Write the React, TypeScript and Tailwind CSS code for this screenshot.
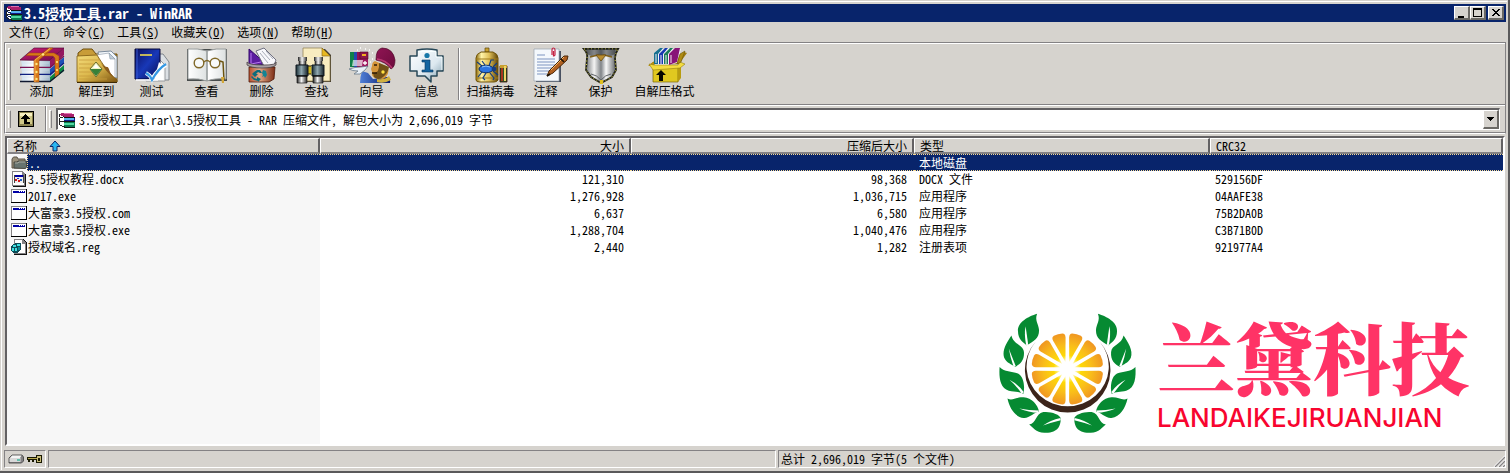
import React from "react";

type IconProps = { className?: string };

/* ---------- small icons ---------- */

const RarIcon = () => (
  <svg viewBox="0 0 16 16" className="h-4 w-4 shrink-0" aria-hidden="true" shapeRendering="crispEdges">
    <path d="M2 1h9l4 1v3H5L1 4V2z" fill="#a8206c" />
    <path d="M3 1h8l3 1H6z" fill="#e070b0" />
    <path d="M5 5h11v5H5z" fill="#101c90" />
    <path d="M5 6h10v2H5z" fill="#58b4f0" />
    <path d="M5 10h11v5H5z" fill="#0a7a50" />
    <path d="M5 11h10v2H5z" fill="#50d8a0" />
    <path d="M1 3l4 2v2H2zM1 7l4 2v2H2zM1 11l4 2v2H3z" fill="#fff" />
    <path d="M0 2h1v3H0zM1 5h3v1H1zM0 6h1v4H0zM1 9h4v1H1zM0 10h1v3H0zM1 13h2v1H1zM3 14h3v1H3zM4 4h1v1H4z" fill="#222" />
    <path d="M5 15h11v1H5zM5 9h11v1H5zM5 5h11v1H5z" fill="#111" />
  </svg>
);

const FolderIcon = () => (
  <svg viewBox="0 0 16 16" className="h-4 w-4 shrink-0" aria-hidden="true">
    <path d="M1 13V4l1.500-2H6l1 2h7v9z" fill="#9a917c" stroke="#5c5547" />
    <path d="M3 13V7h3l1-1h8.500v6l-1 1.500z" fill="#66736f" stroke="#4a4a42" />
    <path d="M4 8h3l1-1h6" stroke="#a6aaa0" fill="none" />
  </svg>
);

const DocxIcon = () => (
  <svg viewBox="0 0 16 16" className="h-4 w-4 shrink-0" aria-hidden="true" shapeRendering="crispEdges">
    <path d="M2 1h10l3 3v12H2z" fill="#111" />
    <path d="M1 0h10l3 3v12H1z" fill="#848284" />
    <path d="M2 1h9v3h2v10H2z" fill="#fff" />
    <path d="M3 4h10v8H3z" fill="#444" />
    <path d="M4 5h8v7H4z" fill="#eee" />
    <path d="M4 4h8v2H4z" fill="#0000a0" />
    <path d="M4 8h2v2H4z" fill="#d01818" />
    <path d="M7 9h2v2H7z" fill="#d01818" />
    <path d="M6 7h2v1H6z" fill="#2030d0" />
    <path d="M9 8h2v2H9z" fill="#2060c0" />
  </svg>
);

const ExeIcon = () => (
  <svg viewBox="0 0 16 16" className="h-4 w-4 shrink-0" aria-hidden="true" shapeRendering="crispEdges">
    <path d="M0 1h16v14H0z" fill="#000" />
    <path d="M0 1h15v13H0z" fill="#848284" />
    <path d="M1 2h14v12H1z" fill="#fff" />
    <path d="M2 3h12v2H2z" fill="#0000a5" />
    <path d="M8 3h1v1H8zM10 3h1v1h-1zM12 3h1v1h-1z" fill="#fff" />
  </svg>
);

const RegIcon = () => (
  <svg viewBox="0 0 16 16" className="h-4 w-4 shrink-0" aria-hidden="true" shapeRendering="crispEdges">
    <path d="M3 0h9l4 4v12H3z" fill="#111" />
    <path d="M3 0h8l4 4v11H3z" fill="#848284" />
    <path d="M4 1h7v4h3v9H4z" fill="#fff" />
    <path d="M1 6l4-2h5v7l-4 3H3l-3-2V8z" fill="#0b4c58" />
    <path d="M2 6h3v2H2zM6 5h3v2H6zM1 9h2v3H1zM4 9h2v3H4z" fill="#3fe0e0" />
    <path d="M7 8h2v3H7z" fill="#0a8c98" />
  </svg>
);

/* ---------- toolbar icons, drawn on a 48 x 38 grid ---------- */

const Art = ({ children }: { children: React.ReactNode }) => (
  <svg viewBox="0 0 48 38" className="h-[38px] w-12 shrink-0" aria-hidden="true">
    {children}
  </svg>
);

const AddIcon = () => (
  <Art>
    <defs>
      <linearGradient id="addTop" x1="0" y1="0" x2="1" y2="1">
        <stop offset="0" stopColor="#d01c74" />
        <stop offset="1" stopColor="#6c0c48" />
      </linearGradient>
      <linearGradient id="addPage" x1="0" x2="1">
        <stop offset="0" stopColor="#cfe0ee" />
        <stop offset=".4" stopColor="#fff" />
        <stop offset="1" stopColor="#9cb4c8" />
      </linearGradient>
    </defs>
    <path d="M32 30l14-12v6L32 35z" fill="#0c8a44" />
    <path d="M32 22l14-12v6L32 29z" fill="#1c50b8" />
    <path d="M31 13L46 1v7L32 21z" fill="#941860" />
    {[14, 21, 28].map((y, i) => (
      <g key={y}>
        <path d={`M3 ${y}h29v7H3q2-3 0-7z`} fill="url(#addPage)" />
        <path d={`M3 ${y + 2}h28`} stroke="#d4dee8" strokeWidth=".6" />
        <path d={`M2 ${y + 6.500}h30L46 ${y - 5}`} fill="none" stroke={["#7c1050", "#102080", "#101830"][i]} strokeWidth="1.300" />
      </g>
    ))}
    <path d="M2 13L16 1h30L31 13.500z" fill="url(#addTop)" stroke="#58083c" strokeWidth=".7" />
    <path d="M16 13L31 1h4L21 13v22h-5zM8 8.500L11 6h25l5 3v18l-4 3V11L35 9z" fill="#d87818" stroke="#9c4c08" strokeWidth=".5" />
    <path d="M17 13L32 1.500M17 13v22" stroke="#ffb860" strokeWidth=".8" fill="none" />
    {[17, 25, 32].map((y) => (
      <circle key={y} cx="18.500" cy={y} r="1.200" fill="#ffe880" />
    ))}
    <circle cx="39" cy="15" r="1.100" fill="#ffe880" />
    <circle cx="39" cy="23" r="1.100" fill="#ffe880" />
    <circle cx="25" cy="7.500" r="1.300" fill="#ffe880" />
  </Art>
);

const ExtractIcon = () => (
  <Art>
    <defs>
      <linearGradient id="exFold" x1="0" y1="0" x2="1" y2="1">
        <stop offset="0" stopColor="#f4dc7c" />
        <stop offset=".5" stopColor="#dcb84c" />
        <stop offset="1" stopColor="#7c5410" />
      </linearGradient>
    </defs>
    <path d="M5 35V6l5-4h9l4 5h21v28z" fill="#c89c38" stroke="#6c4c0c" />
    <path d="M25 5l13-1 6 6v21l-15-3z" fill="#f4f8fc" stroke="#7c8c9c" />
    <path d="M23 8l13-2 6 6v22H28z" fill="#fff" stroke="#98a4b0" strokeWidth=".7" />
    <path d="M36 6l1 6h5z" fill="#c0ccd8" stroke="#8898a8" strokeWidth=".6" />
    <path d="M4 35V9l20-1c5 8 10 16 20 25v2z" fill="url(#exFold)" stroke="#7c5810" strokeWidth=".8" />
    <path d="M6 13h20M6 17h15M6 21h12M6 25h13M6 29h17M6 32h28" stroke="#c89c3c" strokeWidth=".8" />
    <path d="M24 8c3 9 8 12 10 12 3 0 1 7 10 13C36 28 29 20 24 8z" fill="#8c5c1c" />
    <path d="M23 15l6 7-6 8-6-8z" fill="#eef4c0" stroke="#6c6c2c" />
    <path d="M17 22h12l-6 7z" fill="#388038" />
    <path d="M20 21l3-4 3 4z" fill="#fff" />
    <path d="M4 35.500h40" stroke="#3c2804" />
  </Art>
);

const TestIcon = () => (
  <Art>
    <defs>
      <linearGradient id="testBook" x1="0" y1="0" x2="1" y2="1">
        <stop offset="0" stopColor="#0c1060" />
        <stop offset=".5" stopColor="#1838b8" />
        <stop offset="1" stopColor="#080c50" />
      </linearGradient>
    </defs>
    <path d="M26 7h9l6 8v18H25z" fill="#dce0e4" stroke="#80868c" />
    <path d="M18 12h13l6 6v16H18z" fill="#fafafa" stroke="#989ca0" />
    <path d="M7 2h25v30H7z" fill="url(#testBook)" stroke="#060838" />
    <path d="M9 2v30" stroke="#3858d0" />
    <path d="M12 8h12" stroke="#f0dc50" strokeWidth="1.600" />
    <path d="M8 33h22" stroke="#f8f8fc" strokeWidth="1.500" />
    <path d="M26 33h9V19l-4-4" fill="#fff" />
    <path d="M18 26q4 2 6 6Q30 22 38 18" fill="none" stroke="#fff" strokeWidth="4" />
    <path d="M18 26q4 2 6 7Q30 22 38 17" fill="none" stroke="#3498e4" strokeWidth="2.200" />
  </Art>
);

const ViewIcon = () => (
  <Art>
    <defs>
      <linearGradient id="viewPage" x1="0" x2="1">
        <stop offset="0" stopColor="#fff" />
        <stop offset=".46" stopColor="#e0e4e4" />
        <stop offset=".5" stopColor="#909898" />
        <stop offset=".54" stopColor="#fff" />
        <stop offset="1" stopColor="#dce0e0" />
      </linearGradient>
    </defs>
    <path d="M4 2h40v32H4z" fill="#484c4c" />
    <path d="M5 2q10-1 19 2 9-3 19-2v30q-12-1-19 2-8-3-19-2z" fill="url(#viewPage)" stroke="#989c9c" />
    <path d="M24 3v30" stroke="#a0a4a4" />
    <circle cx="16" cy="16" r="4.800" fill="#f8fafa" stroke="#806828" strokeWidth="1.400" />
    <circle cx="32" cy="16" r="4.800" fill="#f8fafa" stroke="#806828" strokeWidth="1.400" />
    <path d="M21 15q3-3 6 0" fill="none" stroke="#806828" strokeWidth="1.200" />
    <path d="M37 14l3 1 1 18" fill="none" stroke="#6c5410" strokeWidth="1.500" />
    <path d="M38 30h3v6h-2z" fill="#d4a838" />
  </Art>
);

const DeleteIcon = () => (
  <Art>
    <defs>
      <linearGradient id="delBin" x1="0" x2="1">
        <stop offset="0" stopColor="#b85030" />
        <stop offset=".4" stopColor="#e0a888" />
        <stop offset="1" stopColor="#7c2c14" />
      </linearGradient>
    </defs>
    <path d="M11 2l17 15-17 2z" fill="#5c1ca0" stroke="#34086c" />
    <path d="M13 6v12M13 17l10-2" stroke="#b878f0" />
    <path d="M18 4l8-3 12 12-2 5-10 1z" fill="#f8f8fc" stroke="#707080" />
    <path d="M24 4l8 9M28 4l7 8M22 6l8 10" stroke="#a8acb8" />
    <path d="M11 20h26l-1 12-5 3H11z" fill="url(#delBin)" stroke="#4c1808" strokeWidth=".8" />
    <path d="M9 15q2 3 16 3t13-3v3q-3 3-14 3T9 18z" fill="#a8a0a4" stroke="#4c4448" strokeWidth=".8" />
    <path d="M16 25l3-2h3l2 3h-2l-2-1-2 2h2l-3 3-3-3z" fill="#0c6c7c" />
    <path d="M25 23l3 1 1 4-2 3-1-2-2 1 1-2-1-2z" fill="#148494" />
    <path d="M14 29l2 2 3 1v-2l4 2-3 3v-1l-4-1-3-3z" fill="#0c6c7c" />
  </Art>
);

const FindIcon = () => (
  <Art>
    <defs>
      <linearGradient id="findBarrel" x1="0" x2="1">
        <stop offset="0" stopColor="#182c34" />
        <stop offset=".45" stopColor="#90a8b0" />
        <stop offset="1" stopColor="#142028" />
      </linearGradient>
      <linearGradient id="findSteel" x1="0" x2="1">
        <stop offset="0" stopColor="#202020" />
        <stop offset=".45" stopColor="#f4f4f4" />
        <stop offset="1" stopColor="#282828" />
      </linearGradient>
    </defs>
    <path d="M11 2h21l6 6v27H11z" fill="#484030" />
    <path d="M10 1h19l8 8v25H10z" fill="#f8ecc0" stroke="#8c7c4c" strokeWidth=".7" />
    <path d="M29 1v8h8z" fill="#e8b820" stroke="#806010" strokeWidth=".6" />
    <path d="M13 19h12v8H13z" fill="#d0b820" stroke="#282008" />
    <path d="M18 19v9h2v-9z" fill="#fff080" />
    {[4, 20].map((x) => (
      <g key={x}>
        <path d={`M${x + 2} 11h7v7h-7z`} fill="url(#findSteel)" stroke="#181818" strokeWidth=".6" />
        <path d={`M${x + 1} 10h9v4H${x + 1}z`} fill="url(#findSteel)" />
        <path d={`M${x - 1} 18h12v11H${x - 1}z`} fill="url(#findBarrel)" stroke="#101820" />
        <path d={`M${x} 29h10v7H${x}z`} fill="url(#findSteel)" stroke="#181818" strokeWidth=".7" />
        <path d={`M${x} 29h10`} stroke="#000" />
      </g>
    ))}
  </Art>
);

const WizardIcon = () => (
  <Art>
    <defs>
      <linearGradient id="wizFez" x1="0" y1="0" x2="1" y2="1">
        <stop offset="0" stopColor="#901454" />
        <stop offset="1" stopColor="#6c0c3c" />
      </linearGradient>
      <linearGradient id="wizRobe" x1="0" x2="1">
        <stop offset="0" stopColor="#5080d8" />
        <stop offset="1" stopColor="#081868" />
      </linearGradient>
    </defs>
    <path d="M12 36q0-6 2-12l6 2 5 6 14-2q4 2 3 6z" fill="url(#wizRobe)" />
    <path d="M27 14l13 6q2 8-5 12l-8-1q-4-2-3-6l-1-3 1-3q0-4 3-5z" fill="#d49438" />
    <path d="M31 16q1 10-6 10l1 4q4 4 9 0 5-4 6-10z" fill="#705018" />
    <path d="M26 18h3M24 26h5" stroke="#301c04" strokeWidth="1.300" />
    <circle cx="35" cy="25" r="1.700" fill="#ffe040" />
    <path d="M28 13Q28 2 34 1q11 0 13 12 0 7-4 9-5-7-15-9z" fill="url(#wizFez)" stroke="#500828" strokeWidth=".7" />
    <path d="M29 12q9 1 15 9" fill="none" stroke="#b83870" strokeWidth="1.500" />
    <path d="M29 32q8 1 12-3l2 4q-7 4-14 2z" fill="#d0b040" />
    <path d="M3 6h17v14H3z" fill="#a01860" />
    <path d="M2 5h4v15H2z" fill="#108048" />
    <path d="M6 5h3v15H6z" fill="#2448b0" />
    <path d="M9 5h3v15H9z" fill="#901050" />
    <path d="M12 5h8v7h-8z" fill="#8c1848" stroke="#500828" strokeWidth=".6" />
    <path d="M14 7h4v2h-4z" fill="#f0b020" />
    <path d="M5 13h10l-1 6H4z" fill="#fff" opacity=".65" />
    <path d="M1 22q6-2 12-2l7-1-3 4-5 4H6l4-3q-6 0-9-2z" fill="#e8f0f8" stroke="#687888" strokeWidth=".8" />
    <path d="M15 16h4M17 14v4M9 3h1M12 1h1M17 2h1M21 3h1M24 6h1M24 12h1M22 15h1" stroke="#fff" strokeWidth="1.300" />
  </Art>
);

const InfoIcon = () => (
  <Art>
    <defs>
      <linearGradient id="infoBg" x1="0" y1="0" x2="1" y2="1">
        <stop offset="0" stopColor="#fff" />
        <stop offset=".6" stopColor="#dce8f0" />
        <stop offset="1" stopColor="#7898a8" />
      </linearGradient>
    </defs>
    <path d="M14 3q10-2 20 0v6h6v15h-6v5h-6v6l-6-6h-8v-5H7V9h7z" fill="url(#infoBg)" stroke="#284858" strokeWidth="1.500" strokeLinejoin="round" />
    <path d="M15 4.500h18V10h6v13" fill="none" stroke="#f8ffff" />
    <circle cx="24" cy="8.500" r="2.600" fill="#1878a8" />
    <path d="M19 13h8v10h3v2H19v-2h3v-8h-3z" fill="#1464a0" stroke="#083860" strokeWidth=".6" />
  </Art>
);

const ScanIcon = () => (
  <Art>
    <defs>
      <linearGradient id="scanTank" x1="0" x2="1">
        <stop offset="0" stopColor="#8c680c" />
        <stop offset=".25" stopColor="#fff4a8" />
        <stop offset=".6" stopColor="#e0c058" />
        <stop offset="1" stopColor="#604408" />
      </linearGradient>
    </defs>
    <path d="M18 1h4v4h-4z" fill="#c8a030" stroke="#604808" strokeWidth=".7" />
    <path d="M9 11q0-4 5-6h12q5 2 5 6v22q-1 2-4 2H13q-4 0-4-2z" fill="url(#scanTank)" stroke="#705408" />
    <path d="M9 12h22M9 31h22" stroke="#a07c1c" />
    <path d="M33 19h7v16h-7z" fill="#285828" stroke="#3c0c04" strokeWidth=".8" />
    <path d="M33 18h7v3h-7z" fill="#c8a030" />
    <path d="M34 21h2v13h-2z" fill="#a83420" />
    <path d="M37 19h2v15h-2z" fill="#f0d468" />
    <path d="M15 19l-5-4M18 18l-3-4M22 19l2-6h3M26 20l4-4M15 25l-4 5M19 26l-3 5 2 2M23 26l4 5-1 2M26 24l5 4" stroke="#103c84" strokeWidth="1.200" fill="none" />
    <ellipse cx="19" cy="22" rx="7" ry="3.800" fill="#2c74e0" stroke="#082860" />
    <path d="M15 20q4-2 8 0" stroke="#90c8ff" fill="none" />
    <ellipse cx="27" cy="22" rx="2.500" ry="2.300" fill="#183c80" />
  </Art>
);

const CommentIcon = () => (
  <Art>
    <path d="M14 4h25v31H14z" fill="#485060" />
    <path d="M12 2h25v32H12z" fill="#f4f8fc" stroke="#98a4b0" strokeWidth=".7" />
    <path d="M15 8h8M15 12h18M15 15h18M15 18h18M15 21h16M15 24h14M15 27h10" stroke="#7c94c0" />
    <path d="M30 8V3q0-2 1.500-2T33 3v5q-.5 1-1.500 1V4" fill="none" stroke="#c42444" strokeWidth="1.200" />
    <path d="M25 29l2-5L42 9l4 0-1 4-14 13z" fill="#b06020" stroke="#4c2808" />
    <path d="M29 23L42 10" stroke="#f4b868" />
    <path d="M39 12l3 3M25 29l3-2" stroke="#1c1408" strokeWidth="1.600" />
  </Art>
);

const ProtectIcon = () => (
  <Art>
    <defs>
      <linearGradient id="shield" x1="0" x2="1">
        <stop offset="0" stopColor="#585c60" />
        <stop offset=".3" stopColor="#f4f4f4" />
        <stop offset=".5" stopColor="#808488" />
        <stop offset=".65" stopColor="#f8f8f8" />
        <stop offset="1" stopColor="#404448" />
      </linearGradient>
    </defs>
    <path d="M7 2h34q-3 5-3 9l1 12-4 7-11 6-10-6-5-7 1-12Q11 6 7 2z" fill="url(#shield)" stroke="#202018" strokeWidth="1.800" />
    <path d="M7 2h34q-3 5-3 9l1 12-4 7-11 6-10-6-5-7 1-12Q11 6 7 2z" fill="none" stroke="#dcd84c" strokeWidth="1" strokeDasharray="1 2.500" />
    <path d="M10 2h28v5l-4 2H14l-4-2z" fill="#383c40" opacity=".6" />
    <path d="M13 10l8-2q3 1 3 4 0-3 3-4l8 2" fill="none" stroke="#806018" strokeWidth="1.600" />
    <path d="M19 8h10l-5 6z" fill="#b88c30" stroke="#604408" strokeWidth=".7" />
    <path d="M14 27q6 1 10 6 4-5 10-6" fill="none" stroke="#606468" />
    <path d="M23 33h3v4h-3z" fill="#e0c020" />
  </Art>
);

const SfxIcon = () => (
  <Art>
    <path d="M8 18l8-6 20-1 7-6 3 1-8 11z" fill="#a07c10" />
    <path d="M13 6l6-5 4 1 4-1 6 1 4-1 3 1-4 14-9 2H13z" fill="#f4f4f8" />
    <path d="M13 6l6-5h3l-5 6v10h-4z" fill="#187090" />
    <path d="M18 7l6-6h3l-5 6v10h-4z" fill="#1838b0" />
    <path d="M23 7l6-6h3l-5 6v10h-4z" fill="#1c7c58" />
    <path d="M28 7l6-6h5l-3 14-8 3z" fill="#881478" />
    <path d="M15 7v9M20 8v9M25 8v9M30 8v8" stroke="#f4ecf4" strokeWidth="1" />
    <path d="M12 19h25v16H12z" fill="#e0c820" stroke="#786408" strokeWidth=".7" />
    <path d="M37 19l3-4v16l-3 4z" fill="#b89c10" />
    <path d="M12 19l-5 0 5-4 2 3z" fill="#b89010" />
    <path d="M8 17l4 6 27-2 5-4-5-2-2 3H13z" fill="#f4dc40" stroke="#907c10" strokeWidth=".6" />
    <path d="M36 17l3-10 5-3-4 11z" fill="#b08c14" stroke="#6c5808" strokeWidth=".6" />
    <path d="M20 23l-5 5h3v6h4v-6h3z" fill="#080800" />
  </Art>
);

/* ---------- data ---------- */

const menus = [
  { label: "文件", key: "F" },
  { label: "命令", key: "C" },
  { label: "工具", key: "S" },
  { label: "收藏夹", key: "O" },
  { label: "选项", key: "N" },
  { label: "帮助", key: "H" },
];

const mainTools = [
  { label: "添加", Icon: AddIcon },
  { label: "解压到", Icon: ExtractIcon },
  { label: "测试", Icon: TestIcon },
  { label: "查看", Icon: ViewIcon },
  { label: "删除", Icon: DeleteIcon },
  { label: "查找", Icon: FindIcon },
  { label: "向导", Icon: WizardIcon },
  { label: "信息", Icon: InfoIcon },
];

const extraTools = [
  { label: "扫描病毒", Icon: ScanIcon },
  { label: "注释", Icon: CommentIcon },
  { label: "保护", Icon: ProtectIcon },
];

const files = [
  { Icon: DocxIcon, name: "3.5授权教程.docx", size: "121,310", packed: "98,368", type: "DOCX 文件", crc: "529156DF" },
  { Icon: ExeIcon, name: "2017.exe", size: "1,276,928", packed: "1,036,715", type: "应用程序", crc: "04AAFE38" },
  { Icon: ExeIcon, name: "大富豪3.5授权.com", size: "6,637", packed: "6,580", type: "应用程序", crc: "75B2DA0B" },
  { Icon: ExeIcon, name: "大富豪3.5授权.exe", size: "1,288,704", packed: "1,040,476", type: "应用程序", crc: "C3B71B0D" },
  { Icon: RegIcon, name: "授权域名.reg", size: "2,440", packed: "1,282", type: "注册表项", crc: "921977A4" },
];

/* ---------- pieces ---------- */

const Grip = () => (
  <span className="my-1 w-[3px] shrink-0 self-stretch border-t border-r border-l border-t-white border-r-[#848284] border-l-white" />
);

const raised =
  "border-t border-r-2 border-b-2 border-l border-t-white border-r-[#6b6965] border-b-[#6b6965] border-l-white bg-[#d6d3ce]";

const CaptionButton = ({ label, className = "", children }: { label: string; children: React.ReactNode } & IconProps) => (
  <button aria-label={label} className={`flex h-3.5 w-4 items-center justify-center ${raised} ${className}`}>
    <svg viewBox="0 0 12 10" className="h-2.5 w-3" shapeRendering="crispEdges" aria-hidden="true">
      {children}
    </svg>
  </button>
);

const ToolButton = ({ label, Icon, wide }: { label: string; Icon: React.FC; wide?: boolean }) => (
  <button className={`flex flex-col items-center ${wide ? "w-[73px]" : "w-[55px]"}`}>
    <Icon />
    <span className="whitespace-nowrap leading-3">{label}</span>
  </button>
);

const segments = Array.from({ length: 12 }, (_, i) => {
  const mid = ((i * 30 + 15) * Math.PI) / 180;
  const half = (11.8 * Math.PI) / 180;
  const at = (r: number, a: number) => `${(268 + r * Math.cos(a)).toFixed(1)} ${(222 + r * Math.sin(a)).toFixed(1)}`;
  return `M${at(22, mid)} L${at(96, mid - half)} Q${at(108, mid - half)} ${at(109, mid - half * 0.6)} Q${at(111, mid)} ${at(109, mid + half * 0.6)} Q${at(108, mid + half)} ${at(96, mid + half)} Z`;
});

const Leaves = () => (
  <>
    <g fill="#068a32">
      <path d="M176 54C150 62 115 80 118 108C118 130 132 140 144 150C165 138 182 130 182 104C181 85 168 75 176 54Z" />
      <path d="M98 120C85 140 68 165 76 188C85 206 98 206 108 216C125 208 138 195 136 170C134 148 104 148 98 120Z" />
      <path d="M62 216C60 245 62 280 90 288C108 292 122 290 134 298C140 275 135 245 118 236C98 228 78 232 62 216Z" />
      <path d="M86 312C92 340 108 368 135 371C152 373 168 352 182 352C178 330 160 310 135 308C115 306 102 320 86 312Z" />
      <path d="M152 391C162 398 172 416 198 416C240 418 248 395 248 372C246 360 215 350 195 353C170 358 175 388 152 391Z" />
    </g>
    <g fill="#fff">
      <path d="M143 150Q136 118 141 92Q145 118 149 148Z" />
      <path d="M105 217Q94 186 90 160Q100 186 111 213Z" />
      <path d="M130 298Q114 274 92 255Q120 270 135 292Z" />
      <path d="M180 355Q150 354 122 342Q152 348 181 348Z" />
      <path d="M248 378Q222 384 194 394Q216 378 247 371Z" />
    </g>
  </>
);

const Brand = () => (
  <div className="pointer-events-none absolute right-[34px] bottom-0 flex items-start">
    <svg viewBox="0 0 540 450" className="h-[148px] w-[178px]" aria-hidden="true">
      <defs>
        <radialGradient id="pulp" gradientUnits="userSpaceOnUse" cx="268" cy="222" r="112">
          <stop offset="0" stopColor="#fff6a0" />
          <stop offset=".3" stopColor="#ffe000" />
          <stop offset=".65" stopColor="#f9bd1a" />
          <stop offset="1" stopColor="#ef9322" />
        </radialGradient>
        <radialGradient id="glow">
          <stop offset=".4" stopColor="#fff" />
          <stop offset="1" stopColor="#fff" stopOpacity="0" />
        </radialGradient>
      </defs>
      <path d="M172 138A130 130 0 1 0 366 138A125 121 0 1 1 172 138Z" fill="#3c241a" />
      {segments.map((d) => (
        <path key={d} d={d} fill="url(#pulp)" />
      ))}
      <circle cx="268" cy="222" r="42" fill="url(#glow)" />
      <Leaves />
      <g transform="translate(537 0) scale(-1 1)">
        <Leaves />
      </g>
    </svg>
    <div className="flex flex-col pt-3">
      <span className="font-['Noto_Serif_CJK_SC','Noto_Sans_CJK_SC',serif] text-[78px] leading-[94px] font-black text-[#ff3366]">兰黛科技</span>
      <span className="font-[Inter,sans-serif] text-[26px] leading-8 font-medium text-[#f8052f]">LANDAIKEJIRUANJIAN</span>
    </div>
  </div>
);

const th =
  "h-4 truncate border-t border-r-2 border-b-2 border-l border-t-white border-r-[#636163] border-b-[#848284] border-l-white bg-[#d6d3ce] px-[5px] font-normal leading-3";

const picked = "border-t border-b border-dotted border-[#f7db94] bg-[#08246b]";

export default function App() {
  return (
    <div className="flex min-h-screen flex-col border-r-2 border-b-2 border-[#5a595a] bg-[#d6d3ce] p-px font-['Noto_Sans_Mono_CJK_SC','Noto_Sans_CJK_SC',monospace] text-xs text-black">
      <div className="flex grow flex-col border-t border-l border-white pt-0.5 pr-px pb-0.5 pl-0.5">
        <header className="flex h-[18px] shrink-0 items-center gap-0.5 bg-[#08246b] pr-0.5 pl-0.5 text-white">
          <RarIcon />
          <h1 className="grow text-sm leading-4 font-bold whitespace-nowrap">3.5授权工具.rar - WinRAR</h1>
          <CaptionButton label="最小化">
            <path d="M2 8h6v2H2z" />
          </CaptionButton>
          <CaptionButton label="最大化" className="-ml-0.5">
            <path d="M1 0h9v9H1zM2 2v6h7V2z" fillRule="evenodd" />
          </CaptionButton>
          <CaptionButton label="关闭">
            <path d="M2 1h2v1h1v1h2V2h1V1h2v1H9v1H8v1H7v1h1v1h1v1h1v1H8V7H7V6H5v1H4v1H2V7h1V6h1V5h1V4H4V3H3V2H2z" />
          </CaptionButton>
        </header>

        <nav className="flex h-5 shrink-0 items-center gap-3 pl-[5px]">
          {menus.map((m) => (
            <button key={m.key} className="whitespace-nowrap leading-4">
              {m.label}(<u>{m.key}</u>)
            </button>
          ))}
        </nav>

        <div className="flex shrink-0 flex-col border border-[#848284] border-b-white">
          <div className="flex h-[62px] items-stretch gap-[3px] border-t border-l border-white border-b border-b-[#848284] pl-0.5">
            <Grip />
            <div className="flex items-start pt-[3px]">
              {mainTools.map((t) => (
                <ToolButton key={t.label} {...t} />
              ))}
            </div>
            <span className="my-1 ml-px w-0.5 border-r border-l border-r-white border-l-[#848284]" />
            <div className="flex items-start pt-[3px]">
              {extraTools.map((t) => (
                <ToolButton key={t.label} {...t} />
              ))}
              <ToolButton label="自解压格式" Icon={SfxIcon} wide />
            </div>
          </div>

          <div className="flex h-7 items-stretch border-t border-b border-l border-t-white border-b-[#848284] border-l-white pl-0.5">
            <Grip />
            <button aria-label="向上" className="flex w-[30px] items-center justify-center">
              <svg viewBox="0 0 16 16" className="h-4 w-4" aria-hidden="true" shapeRendering="crispEdges">
                <path d="M0 0h16v16H0z" fill="#000" />
                <path d="M1 1h14v14H1z" fill="#8c8450" />
                <path d="M2 2h12v11H2z" fill="#d0c888" />
                <path d="M2 2h12v3H2z" fill="#f8f0c0" />
                <path d="M7 3h1v1h1v1h1v1h1v1h1v1H9v3h3v2H6V8H3V7h1V6h1V5h1V4h1z" fill="#000" />
              </svg>
            </button>
            <span className="ml-1 w-0.5 border-r border-l border-r-white border-l-[#848284]" />
            <span className="ml-0.5 flex">
              <Grip />
            </span>
            <div className="my-0.5 mr-[5px] ml-1 flex grow items-center border-t-2 border-r border-b border-l-2 border-t-[#636163] border-r-white border-b-white border-l-[#636163] bg-white pl-px">
              <RarIcon />
              <div className="relative flex grow self-stretch">
                <select aria-label="当前路径" className="w-full appearance-none bg-white pl-1 leading-4 outline-none">
                  <option>3.5授权工具.rar\3.5授权工具 - RAR 压缩文件, 解包大小为 2,696,019 字节</option>
                </select>
                <span className={`pointer-events-none absolute inset-y-0 right-0 flex w-4 items-center justify-center ${raised}`}>
                  <svg viewBox="0 0 7 4" className="h-1 w-[7px]" aria-hidden="true" shapeRendering="crispEdges">
                    <path d="M0 0h7v1H6v1H5v1H4v1H3V3H2V2H1V1H0z" />
                  </svg>
                </span>
              </div>
            </div>
          </div>
        </div>

        <main className="relative mx-px mt-0.5 grow border-2 border-t-[#636163] border-r-white border-b-white border-l-[#636163] bg-[linear-gradient(to_right,#f7f7f7_313px,#ffffff_313px)]">
          <Brand />
          <table className="relative w-full table-fixed border-separate border-spacing-0 leading-4 whitespace-nowrap">
            <colgroup>
              <col className="w-[313px]" />
              <col className="w-[311px]" />
              <col className="w-[283px]" />
              <col className="w-[296px]" />
              <col />
            </colgroup>
            <thead>
              <tr>
                <th className={`${th} text-left`}>
                  <span className="flex items-center gap-3">
                    名称
                    <svg viewBox="0 0 12 12" className="h-3 w-3" aria-hidden="true">
                      <path d="M6 1l5 5.500H8V11H4V6.500H1z" fill="#29b6f0" stroke="#082468" strokeLinejoin="round" />
                    </svg>
                  </span>
                </th>
                <th className={`${th} text-right`}>大小</th>
                <th className={`${th} text-right`}>压缩后大小</th>
                <th className={`${th} text-left`}>类型</th>
                <th className={`${th} border-r-0 text-left`}>CRC32</th>
              </tr>
            </thead>
            <tbody>
              <tr className="h-[17px] text-white">
                <td className="p-0">
                  <span className="flex items-center pl-1">
                    <FolderIcon />
                    <span className="grow border-t border-b border-l border-dotted border-[#f7db94] bg-[#08246b] pl-px leading-[15px]">..</span>
                  </span>
                </td>
                <td className={`${picked} p-0`} />
                <td className={`${picked} p-0`} />
                <td className={`${picked} py-0 pl-[5px] leading-[15px]`}>本地磁盘</td>
                <td className={`${picked} p-0`} />
              </tr>
              {files.map(({ Icon, ...f }) => (
                <tr key={f.name} className="h-[17px]">
                  <td className="p-0 align-top">
                    <span className="flex items-center gap-px pl-1">
                      <Icon />
                      {f.name}
                    </span>
                  </td>
                  <td className="py-0 pr-[7px] pl-0 text-right align-top">{f.size}</td>
                  <td className="py-0 pr-[7px] pl-0 text-right align-top">{f.packed}</td>
                  <td className="py-0 pr-0 pl-[5px] align-top">{f.type}</td>
                  <td className="py-0 pr-0 pl-[5px] align-top">{f.crc}</td>
                </tr>
              ))}
            </tbody>
          </table>
        </main>

        <footer className="mt-1 flex h-[18px] shrink-0 items-stretch gap-0.5">
          <div className="flex w-[42px] items-center gap-px border border-[#848284] border-r-white border-b-white pl-[3px]">
            <svg viewBox="0 0 16 10" className="h-2.5 w-4" aria-hidden="true">
              <path d="M1 4l3-3h10l1.500 2v4l-2 2H1z" fill="#848284" stroke="#3c3c3c" strokeWidth=".8" />
              <path d="M1.500 4h11v4h-11z" fill="#d8d8d8" />
              <path d="M2 4l2-2.500h9.500L12 4z" fill="#f4f4f4" />
              <path d="M9 6h3" stroke="#18b090" strokeWidth="1.200" />
            </svg>
            <svg viewBox="0 0 18 10" className="h-2.5 w-[18px]" aria-hidden="true" shapeRendering="crispEdges">
              <path d="M2 3h9V1h6v8h-6V6H9v2H7V6H5v2H3V6H2z" fill="#181800" />
              <path d="M3 4h9v1H3z" fill="#b8a850" />
              <path d="M12 2h4v6h-4z" fill="#c8bc78" />
              <path d="M13 4h2v3h-2z" fill="#181800" />
            </svg>
          </div>
          <div className="w-[728px] border border-[#848284] border-r-white border-b-white" />
          <div className="relative grow border border-[#848284] border-r-white border-b-white pl-0.5 leading-4">
            总计 2,696,019 字节(5 个文件)
            <svg viewBox="0 0 12 12" className="absolute right-0 bottom-0 h-3 w-3" aria-hidden="true">
              <path d="M1 12L12 1M5 12l7-7M9 12l3-3" stroke="#fff" strokeWidth="1.200" />
              <path d="M2 12L12 2M6 12l6-6M10 12l2-2" stroke="#848284" strokeWidth="1.200" />
            </svg>
          </div>
        </footer>
      </div>
    </div>
  );
}
